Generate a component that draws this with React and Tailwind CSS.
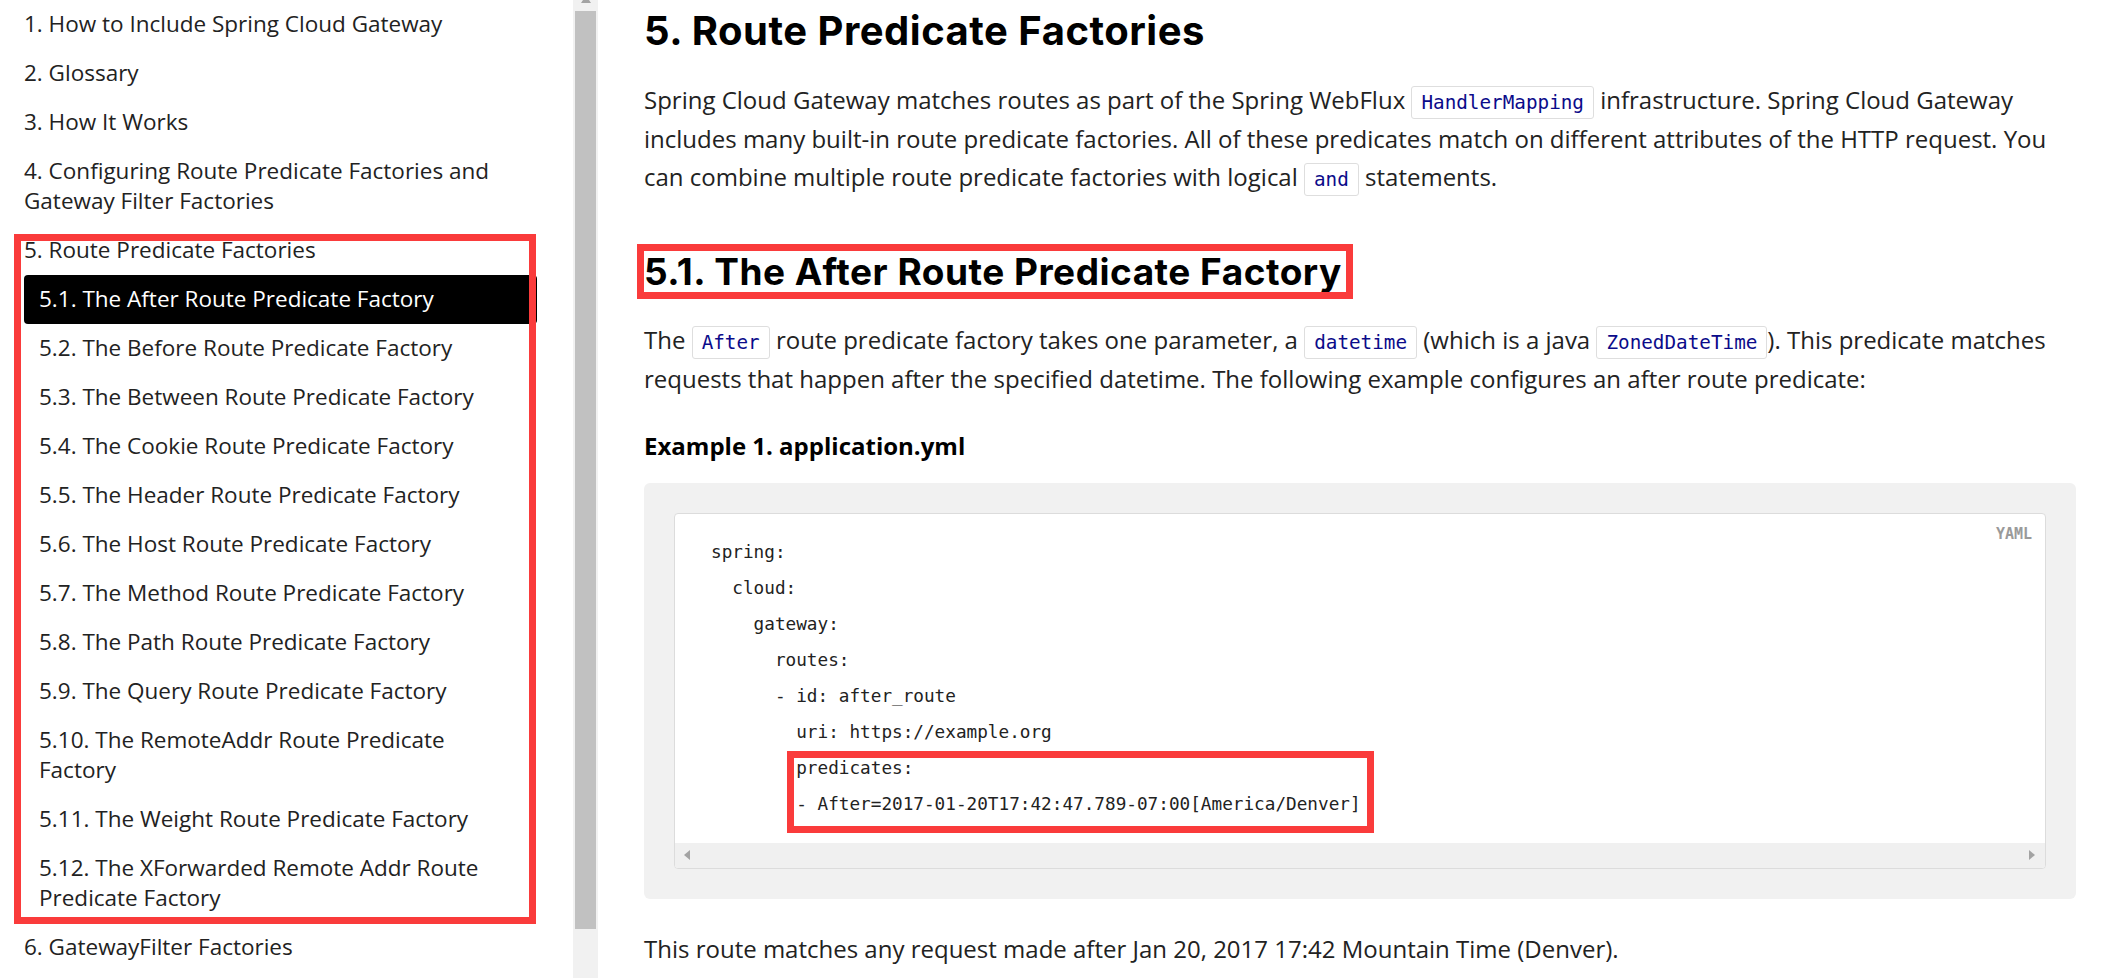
import React from "react";

const Code = ({ children }) => (
  <code className="rounded-[3px] border border-[#dedede] bg-white px-[9px] py-[4px] font-['DejaVu_Sans_Mono',monospace] text-[19.3px] leading-[20px] text-[#0b0b8a]">
    {children}
  </code>
);

const subItems = [
  "5.1. The After Route Predicate Factory",
  "5.2. The Before Route Predicate Factory",
  "5.3. The Between Route Predicate Factory",
  "5.4. The Cookie Route Predicate Factory",
  "5.5. The Header Route Predicate Factory",
  "5.6. The Host Route Predicate Factory",
  "5.7. The Method Route Predicate Factory",
  "5.8. The Path Route Predicate Factory",
  "5.9. The Query Route Predicate Factory",
  ["5.10. The RemoteAddr Route Predicate", "Factory"],
  "5.11. The Weight Route Predicate Factory",
  ["5.12. The XForwarded Remote Addr Route", "Predicate Factory"],
];

export default function App() {
  return (
    <div className="flex h-[978px] w-[2126px] overflow-hidden bg-white font-['Open_Sans',sans-serif] text-[#222]">
      {/* Sidebar */}
      <aside className="w-[573px] shrink-0 overflow-hidden">
        <ul className="mt-[-0.5px] pl-[24px] text-[22.5px] leading-[30px]">
          <li className="py-[9.5px]">1. How to Include Spring Cloud Gateway</li>
          <li className="py-[9.5px]">2. Glossary</li>
          <li className="py-[9.5px]">3. How It Works</li>
          <li className="py-[9.5px]">
            4. Configuring Route Predicate Factories and
            <br />
            Gateway Filter Factories
          </li>
          <li className="relative">
            <div className="py-[9.5px]">5. Route Predicate Factories</div>
            <ul className="w-[513px]">
              {subItems.map((it, i) => (
                <li
                  key={i}
                  className={
                    i === 0
                      ? "rounded-[4px] bg-black px-[15px] py-[9.5px] text-white"
                      : "px-[15px] py-[9.5px]"
                  }
                >
                  {Array.isArray(it) ? (
                    <>
                      {it[0]}
                      <br />
                      {it[1]}
                    </>
                  ) : (
                    it
                  )}
                </li>
              ))}
            </ul>
            <div className="pointer-events-none absolute -bottom-[1px] left-[-10px] top-[8px] w-[522px] border-[7px] border-[#fa3b3b]" />
          </li>
          <li className="py-[9.5px]">6. GatewayFilter Factories</li>
        </ul>
      </aside>

      {/* Sidebar scrollbar */}
      <div className="flex w-[25px] shrink-0 flex-col bg-[#f1f1f1]">
        <div className="flex h-[11px] justify-center">
          <svg width="10" height="4" viewBox="0 0 10 4">
            <polygon points="2,0 8,0 10,3 0,3" fill="#a3a3a3" />
          </svg>
        </div>
        <div className="mx-[2px] h-[918px] bg-[#c1c1c1]" />
      </div>

      {/* Main */}
      <main className="min-w-0 flex-1 pl-[46px] pr-[50px]">
        <h1 className="pt-[7px] font-['Inter',sans-serif] text-[40px] font-bold leading-[48px] tracking-[0.5px] text-black">
          5. Route Predicate Factories
        </h1>
        <p className="mt-[26px] text-[24px] leading-[38.5px]">
          Spring Cloud Gateway matches routes as part of the Spring WebFlux{" "}
          <Code>HandlerMapping</Code> infrastructure. Spring Cloud Gateway
          <br />
          includes many built-in route predicate factories. All of these
          predicates match on different attributes of the HTTP request. You
          <br />
          can combine multiple route predicate factories with logical{" "}
          <Code>and</Code> statements.
        </p>

        <div className="mt-[53px]">
          <h2 className="relative inline-block font-['Inter',sans-serif] text-[37px] font-bold leading-[44px] tracking-[0.5px] text-black">
            5.1. The After Route Predicate Factory
            <span className="pointer-events-none absolute -bottom-[5px] -left-[7px] -right-[11px] -top-[6px] border-[7px] border-[#fa3b3b]" />
          </h2>
        </div>

        <p className="mt-[26px] text-[24px] leading-[39px]">
          The <Code>After</Code> route predicate factory takes one parameter, a{" "}
          <Code>datetime</Code> (which is a java <Code>ZonedDateTime</Code>).
          This predicate matches
          <br />
          requests that happen after the specified datetime. The following
          example configures an after route predicate:
        </p>

        <div className="mt-[33px] text-[24px] font-bold leading-[30px] text-black">
          Example 1. application.yml
        </div>

        <div className="mt-[22px] rounded-[6px] bg-[#f1f1f1] p-[30px]">
          <div className="relative overflow-hidden rounded-[4px] border border-[#dcdcdc] bg-white">
            <span className="absolute right-[13px] top-[11px] font-['DejaVu_Sans_Mono',monospace] text-[15px] font-bold leading-[18px] text-[#9a9a9a]">
              YAML
            </span>
            <div className="whitespace-pre pb-[21px] pl-[36px] pt-[20px] font-['DejaVu_Sans_Mono',monospace] text-[17.7px] leading-[36px] text-[#222]">
              <div>spring:</div>
              <div>{"  cloud:"}</div>
              <div>{"    gateway:"}</div>
              <div>{"      routes:"}</div>
              <div>{"      - id: after_route"}</div>
              <div>{"        uri: https://example.org"}</div>
              <div className="relative ml-[8ch] w-fit">
                <div>predicates:</div>
                <div>- After=2017-01-20T17:42:47.789-07:00[America/Denver]</div>
                <span className="pointer-events-none absolute -bottom-[11px] -left-[9px] -right-[13px] top-[1px] border-[7px] border-[#fa3b3b]" />
              </div>
            </div>
            <div className="flex h-[25px] items-center justify-between bg-[#f0f0f0] pl-[9px] pr-[10px]">
              <svg width="6" height="10" viewBox="0 0 6 10">
                <polygon points="6,0 6,10 0,5" fill="#a3a3a3" />
              </svg>
              <svg width="6" height="10" viewBox="0 0 6 10">
                <polygon points="0,0 0,10 6,5" fill="#a3a3a3" />
              </svg>
            </div>
          </div>
        </div>

        <p className="mt-[31px] text-[24px] leading-[38.5px]">
          This route matches any request made after Jan 20, 2017 17:42 Mountain
          Time (Denver).
        </p>
      </main>
    </div>
  );
}
